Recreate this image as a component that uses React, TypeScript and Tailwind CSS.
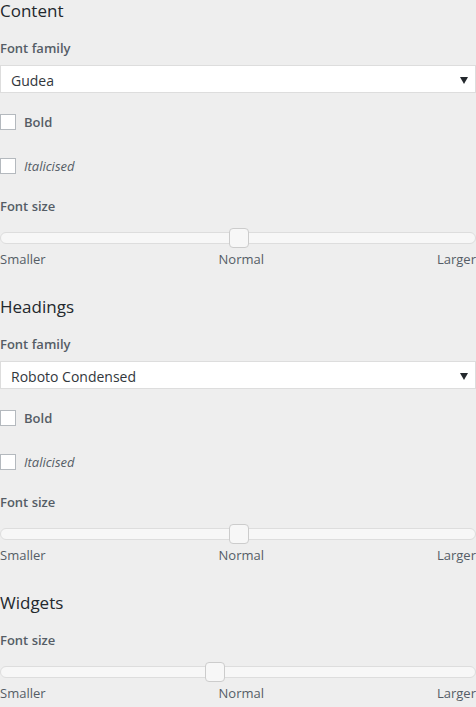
import React from "react";

type SectionProps = {
  title: string;
  family?: string;
  thumbLeft: number;
  first?: boolean;
};

function Checkbox({ label, italic }: { label: string; italic?: boolean }) {
  return (
    <div className="flex h-4 items-center">
      <span className="block h-4 w-4 border border-[#b4b9be] bg-white" />
      <span
        className={
          italic
            ? "ml-2 pt-[2px] text-[13px] italic text-[#555d66]"
            : "ml-2 pt-[2px] text-[13px] font-semibold text-[#555d66]"
        }
      >
        {label}
      </span>
    </div>
  );
}

function Slider({ thumbLeft }: { thumbLeft: number }) {
  return (
    <div className="relative mt-3 flex h-5 items-center">
      <div className="h-3 w-full rounded-md border border-[#dddddd] bg-[#f7f7f7]" />
      <div
        className="absolute top-0 h-5 w-5 rounded-[4px] border border-[#cccccc] bg-[#f7f7f7]"
        style={{ left: thumbLeft }}
      />
    </div>
  );
}

function Section({ title, family, thumbLeft, first }: SectionProps) {
  return (
    <section className={first ? "" : "mt-7"}>
      <h3 className="h-[22px] text-[17px] leading-[22px] text-[#23282d]">{title}</h3>
      {family && (
        <>
          <div className="mt-4 h-5 text-[13px] font-semibold leading-5 text-[#555d66]">Font family</div>
          <div className="mt-[7px] flex h-7 items-center justify-between border border-[#dddddd] bg-white pl-[10px] pr-[5px] pt-[2px] text-[14px] text-[#32373c]">
            <span>{family}</span>
            <svg width="8" height="7" viewBox="0 0 8 7" className="mr-[2px]">
              <path d="M0 0h8L4 7z" fill="#23282d" />
            </svg>
          </div>
          <div className="mt-[21px]">
            <Checkbox label="Bold" />
          </div>
          <div className="mt-7">
            <Checkbox label="Italicised" italic />
          </div>
        </>
      )}
      <div className={(family ? "mt-[22px]" : "mt-4") + " h-5 text-[13px] font-semibold leading-5 text-[#555d66]"}>
        Font size
      </div>
      <Slider thumbLeft={thumbLeft} />
      <div className="mt-[2px] flex h-[18px] justify-between text-[13px] leading-[18px] text-[#555d66]">
        <span>Smaller</span>
        <span>Normal</span>
        <span>Larger</span>
      </div>
    </section>
  );
}

export default function App() {
  return (
    <div
      className="min-h-[707px] w-[476px] bg-[#eeeeee]"
      style={{ fontFamily: '"Open Sans", "Noto Sans", sans-serif' }}
    >
      <Section title="Content" family="Gudea" thumbLeft={229} first />
      <Section title="Headings" family="Roboto Condensed" thumbLeft={229} />
      <Section title="Widgets" thumbLeft={205} />
    </div>
  );
}
